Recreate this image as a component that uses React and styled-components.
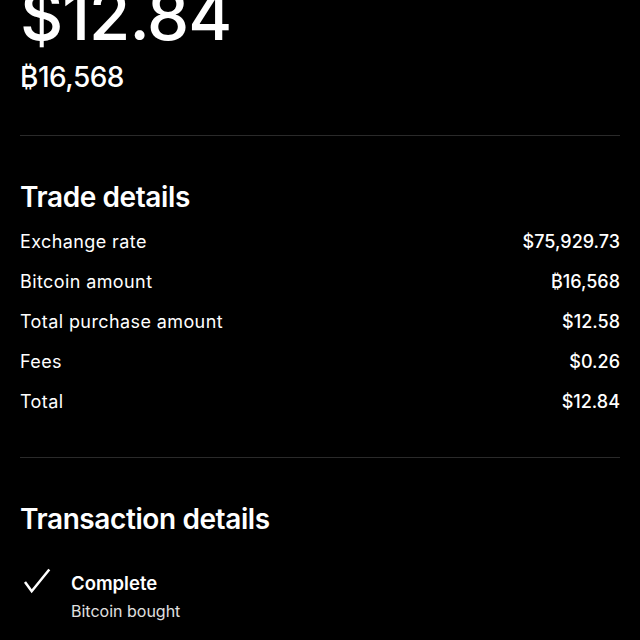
import React from 'react'
import styled, { createGlobalStyle } from 'styled-components'

const GlobalStyle = createGlobalStyle`
  html, body {
    margin: 0;
    padding: 0;
    background: #000;
  }
  body {
    font-family: Inter, "Liberation Sans", sans-serif;
    color: #fff;
    overflow: hidden;
  }
`

const Page = styled.div`
  width: 640px;
  height: 640px;
  padding: 0 20px;
  box-sizing: border-box;
  background: #000;
  overflow: hidden;
`

const Hero = styled.div`
  margin-top: -18px;
  padding-bottom: 41px;
  border-bottom: 1px solid #2a2a2a;
`

const Amount = styled.div`
  font-size: 67px;
  line-height: 67px;
  font-weight: 500;
  letter-spacing: -1px;
`

const CryptoAmount = styled.div`
  margin-top: 11px;
  font-size: 28px;
  line-height: 34px;
  font-weight: 500;
  letter-spacing: -0.5px;
`

const Section = styled.section`
  padding: 43px 0 ${p => (p.$last ? '0' : '36px')};
  border-bottom: ${p => (p.$last ? 'none' : '1px solid #2a2a2a')};
`

const SectionTitle = styled.h2`
  margin: 0 0 6px;
  font-size: 28px;
  line-height: 36px;
  font-weight: 600;
  letter-spacing: -0.4px;
`

const Row = styled.div`
  display: flex;
  justify-content: space-between;
  align-items: center;
  height: 40px;
  font-size: 18px;
`

const Label = styled.span`
  font-weight: 400;
  letter-spacing: 0.4px;
`

const Value = styled.span`
  font-weight: 500;
`

const Status = styled.div`
  display: flex;
  align-items: flex-start;
  gap: 19px;
  margin-top: 34px;
  padding-left: 2px;
`

const CheckIcon = styled.svg`
  width: 30px;
  height: 28px;
  margin-top: -4px;
  flex: none;
`

const StatusText = styled.div`
  display: flex;
  flex-direction: column;
`

const StatusTitle = styled.span`
  font-size: 18.5px;
  line-height: 24px;
  font-weight: 600;
`

const StatusSub = styled.span`
  margin-top: 3px;
  font-size: 16px;
  line-height: 26px;
  color: #e0e0e0;
`

const rows = [
  ['Exchange rate', '$75,929.73'],
  ['Bitcoin amount', '₿16,568'],
  ['Total purchase amount', '$12.58'],
  ['Fees', '$0.26'],
  ['Total', '$12.84'],
]

export default function App() {
  return (
    <Page>
      <GlobalStyle />
      <Hero>
        <Amount>$12.84</Amount>
        <CryptoAmount>₿16,568</CryptoAmount>
      </Hero>
      <Section>
        <SectionTitle>Trade details</SectionTitle>
        {rows.map(([label, value]) => (
          <Row key={label}>
            <Label>{label}</Label>
            <Value>{value}</Value>
          </Row>
        ))}
      </Section>
      <Section $last>
        <SectionTitle>Transaction details</SectionTitle>
        <Status>
          <CheckIcon viewBox="0 0 30 28" fill="none">
            <path d="M3 15 L9.7 24.3 L27.3 2.5" stroke="#fff" strokeWidth="2.5" />
          </CheckIcon>
          <StatusText>
            <StatusTitle>Complete</StatusTitle>
            <StatusSub>Bitcoin bought</StatusSub>
          </StatusText>
        </Status>
      </Section>
    </Page>
  )
}
